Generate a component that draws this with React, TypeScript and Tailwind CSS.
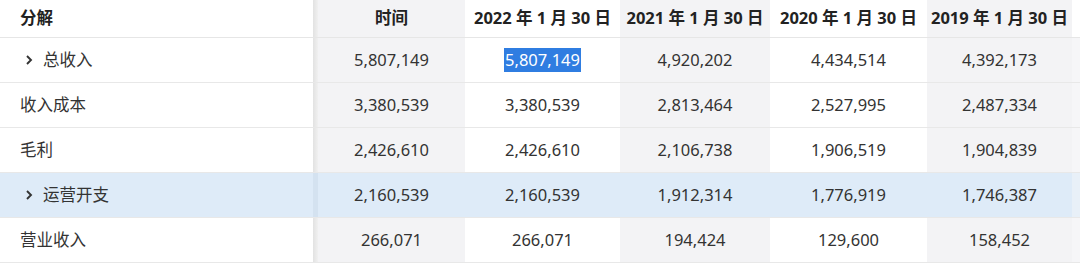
const cols = [
  { label: "时间", w: "w-[147px]", gray: true },
  { label: "2022 年 1 月 30 日", w: "w-[155px]", gray: false },
  { label: "2021 年 1 月 30 日", w: "w-[150px]", gray: true },
  { label: "2020 年 1 月 30 日", w: "w-[157px]", gray: false },
  { label: "2019 年 1 月 30 日", w: "w-[145px]", gray: true },
];

const rows = [
  { label: "总收入", expand: true, values: ["5,807,149", "5,807,149", "4,920,202", "4,434,514", "4,392,173"] },
  { label: "收入成本", values: ["3,380,539", "3,380,539", "2,813,464", "2,527,995", "2,487,334"] },
  { label: "毛利", values: ["2,426,610", "2,426,610", "2,106,738", "1,906,519", "1,904,839"] },
  { label: "运营开支", expand: true, active: true, values: ["2,160,539", "2,160,539", "1,912,314", "1,776,919", "1,746,387"] },
  { label: "营业收入", values: ["266,071", "266,071", "194,424", "129,600", "158,452"] },
];

function Chevron() {
  return (
    <svg width="10" height="14" viewBox="0 0 10 14" className="mr-[9px]">
      <path d="M3 3 L7 7 L3 11" fill="none" stroke="#333" strokeWidth="1.9" />
    </svg>
  );
}

export default function App() {
  return (
    <div className="w-[1080px] h-[263px] overflow-hidden bg-white text-[16.5px] text-[#333] [font-family:'Noto_Sans','Noto_Sans_CJK_SC',sans-serif]">
      {/* header */}
      <div className="flex h-[38px] border-b border-[#e6e6e6]">
        <div className="w-[313px] flex items-center pl-[20px] font-bold text-[#222]">分解</div>
        <div className="w-[5px] bg-gradient-to-r from-[#e2e2e2] to-[#f0f0f0]" />
        {cols.map((c) => (
          <div
            key={c.label}
            className={`${c.w} flex items-center justify-center font-bold text-[#222] whitespace-nowrap ${c.gray ? "bg-[#f3f3f5]" : "bg-white"}`}
          >
            {c.label}
          </div>
        ))}
        <div className="flex-1 bg-white" />
      </div>
      {/* rows */}
      {rows.map((r, i) => (
        <div
          key={r.label}
          className={`flex h-[45px] border-b border-[#e8e8e8] ${r.active ? "bg-[#deebf8]" : ""}`}
        >
          <div className={`w-[313px] flex items-center ${r.expand ? "pl-[24px]" : "pl-[20px]"}`}>
            {r.expand && <Chevron />}
            <span>{r.label}</span>
          </div>
          <div className={`w-[5px] ${r.active ? "bg-[#d4e2f0]" : "bg-gradient-to-r from-[#e2e2e2] to-[#f0f0f0]"}`} />
          {cols.map((c, j) => (
            <div
              key={j}
              className={`${c.w} flex items-center justify-center ${r.active ? "bg-[#deebf8]" : c.gray ? "bg-[#f3f3f5]" : "bg-white"}`}
            >
              {i === 0 && j === 1 ? (
                <span className="bg-[#2f7de1] text-white px-[1px]">{r.values[j]}</span>
              ) : (
                r.values[j]
              )}
            </div>
          ))}
          <div className={`flex-1 ${r.active ? "bg-[#e8f0f8]" : "bg-[#f6f6f8]"}`} />
        </div>
      ))}
    </div>
  );
}
